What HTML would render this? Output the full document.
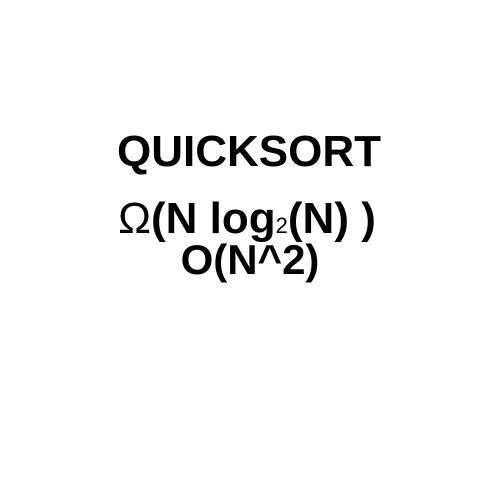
<!DOCTYPE html>
<html><head><style>
html,body{margin:0;padding:0;background:#fff;width:500px;height:500px;overflow:hidden}
.l{position:absolute;left:0;width:500px;text-align:center;font-family:"Liberation Sans",Arial,sans-serif;font-weight:bold;color:#000;white-space:nowrap;line-height:1}
.o{font-weight:normal}
sub{font-size:0.5em;vertical-align:baseline;font-weight:normal}
</style></head><body>
<div class="l" style="top:130px;font-size:44px;left:-1px">QUICKSORT</div>
<div class="l" style="top:197px;font-size:44px;left:-3px"><span class="o">Ω</span>(N log<sub>2</sub>(N) )</div>
<div class="l" style="top:239px;font-size:42px">O(N^2)</div>
</body></html>
